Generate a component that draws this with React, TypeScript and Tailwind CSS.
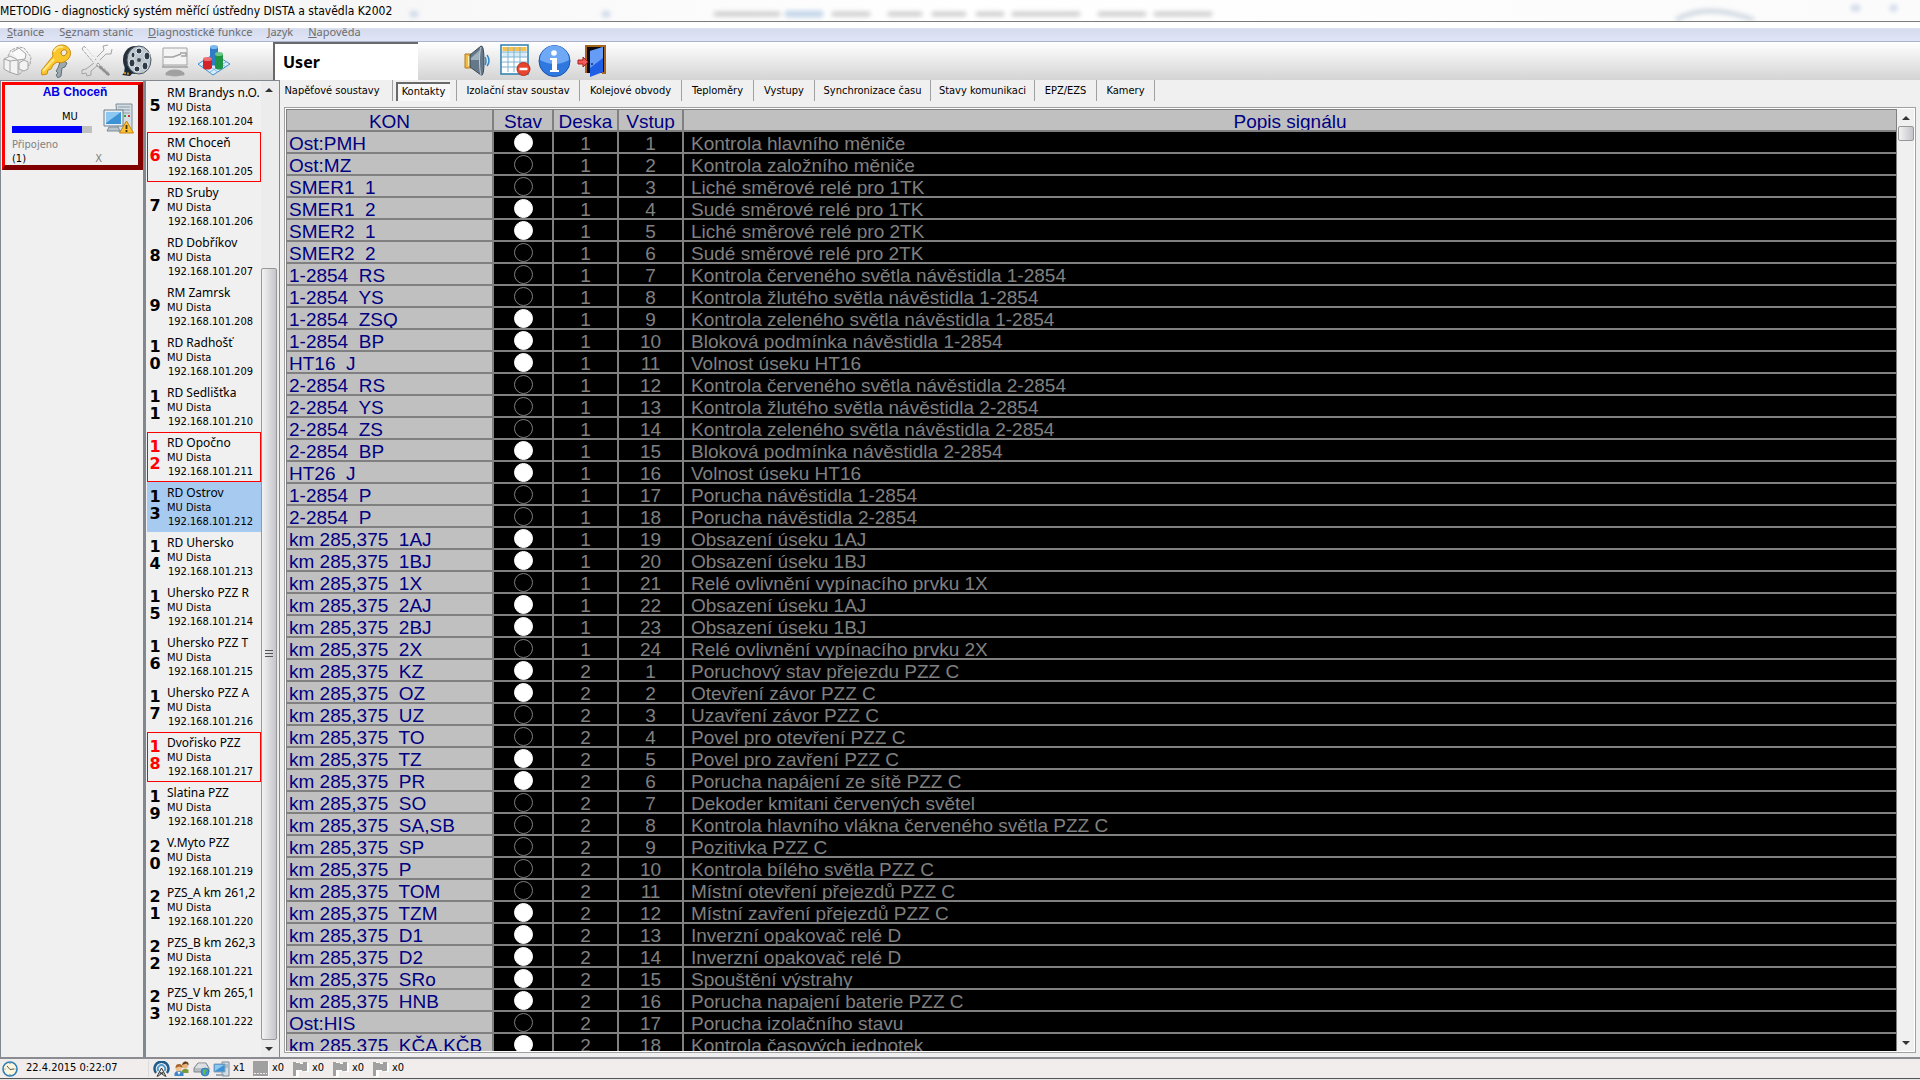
import type { ReactNode } from 'react';
import clsx from 'clsx';

const menu = ['Stanice', 'Seznam stanic', 'Diagnostické funkce', 'Jazyk', 'Napověda'];
const menuKeys = [0, 1, 0, 0, 0];

const tabs = [
  { label: 'Napěťové soustavy', width: 'w-[113px] pr-2' },
  { label: 'Kontakty', width: 'w-16 pr-1' },
  { label: 'Izolační stav soustav', width: 'w-[123px]' },
  { label: 'Kolejové obvody', width: 'w-[102px]' },
  { label: 'Teploměry', width: 'w-[72px]' },
  { label: 'Vystupy', width: 'w-[61px]' },
  { label: 'Synchronizace času', width: 'w-[116px]' },
  { label: 'Stavy komunikaci', width: 'w-[104px]' },
  { label: 'EPZ/EZS', width: 'w-[62px]' },
  { label: 'Kamery', width: 'w-[58px]' },
];

const stations = [
  { no: 5, name: 'RM Brandys n.O.' },
  { no: 6, name: 'RM Choceň', alarm: true },
  { no: 7, name: 'RD Sruby' },
  { no: 8, name: 'RD Dobříkov' },
  { no: 9, name: 'RM Zamrsk' },
  { no: 10, name: 'RD Radhošť' },
  { no: 11, name: 'RD Sedlišťka' },
  { no: 12, name: 'RD Opočno', alarm: true },
  { no: 13, name: 'RD Ostrov', selected: true },
  { no: 14, name: 'RD Uhersko' },
  { no: 15, name: 'Uhersko PZZ R' },
  { no: 16, name: 'Uhersko PZZ T' },
  { no: 17, name: 'Uhersko PZZ A' },
  { no: 18, name: 'Dvořisko PZZ', alarm: true },
  { no: 19, name: 'Slatina PZZ' },
  { no: 20, name: 'V.Myto PZZ' },
  { no: 21, name: 'PZS_A km 261,2' },
  { no: 22, name: 'PZS_B km 262,3' },
  { no: 23, name: 'PZS_V km 265,1' },
];

// name, state, board, input, description
type Row = [string, 0 | 1, number, number, string];

const rows: Row[] = [
  ['Ost:PMH', 1, 1, 1, 'Kontrola hlavního měniče'],
  ['Ost:MZ', 0, 1, 2, 'Kontrola založního měniče'],
  ['SMER1  1', 0, 1, 3, 'Liché směrové relé pro 1TK'],
  ['SMER1  2', 1, 1, 4, 'Sudé směrové relé pro 1TK'],
  ['SMER2  1', 1, 1, 5, 'Liché směrové relé pro 2TK'],
  ['SMER2  2', 0, 1, 6, 'Sudé směrové relé pro 2TK'],
  ['1-2854  RS', 0, 1, 7, 'Kontrola červeného světla návěstidla 1-2854'],
  ['1-2854  YS', 0, 1, 8, 'Kontrola žlutého světla návěstidla 1-2854'],
  ['1-2854  ZSQ', 1, 1, 9, 'Kontrola zeleného světla návěstidla 1-2854'],
  ['1-2854  BP', 1, 1, 10, 'Bloková podmínka návěstidla 1-2854'],
  ['HT16  J', 1, 1, 11, 'Volnost úseku HT16'],
  ['2-2854  RS', 0, 1, 12, 'Kontrola červeného světla návěstidla 2-2854'],
  ['2-2854  YS', 0, 1, 13, 'Kontrola žlutého světla návěstidla 2-2854'],
  ['2-2854  ZS', 0, 1, 14, 'Kontrola zeleného světla návěstidla 2-2854'],
  ['2-2854  BP', 1, 1, 15, 'Bloková podmínka návěstidla 2-2854'],
  ['HT26  J', 1, 1, 16, 'Volnost úseku HT16'],
  ['1-2854  P', 0, 1, 17, 'Porucha návěstidla 1-2854'],
  ['2-2854  P', 0, 1, 18, 'Porucha návěstidla 2-2854'],
  ['km 285,375  1AJ', 1, 1, 19, 'Obsazení úseku 1AJ'],
  ['km 285,375  1BJ', 1, 1, 20, 'Obsazení úseku 1BJ'],
  ['km 285,375  1X', 0, 1, 21, 'Relé ovlivnění vypínacího prvku 1X'],
  ['km 285,375  2AJ', 1, 1, 22, 'Obsazení úseku 1AJ'],
  ['km 285,375  2BJ', 1, 1, 23, 'Obsazení úseku 1BJ'],
  ['km 285,375  2X', 0, 1, 24, 'Relé ovlivnění vypínacího prvku 2X'],
  ['km 285,375  KZ', 1, 2, 1, 'Poruchový stav přejezdu PZZ C'],
  ['km 285,375  OZ', 1, 2, 2, 'Otevření závor PZZ C'],
  ['km 285,375  UZ', 0, 2, 3, 'Uzavření závor PZZ C'],
  ['km 285,375  TO', 0, 2, 4, 'Povel pro otevření PZZ C'],
  ['km 285,375  TZ', 1, 2, 5, 'Povel pro zavření PZZ C'],
  ['km 285,375  PR', 1, 2, 6, 'Porucha napájení ze sítě PZZ C'],
  ['km 285,375  SO', 0, 2, 7, 'Dekoder kmitani červených světel'],
  ['km 285,375  SA,SB', 0, 2, 8, 'Kontrola hlavního vlákna červeného světla PZZ C'],
  ['km 285,375  SP', 0, 2, 9, 'Pozitivka PZZ C'],
  ['km 285,375  P', 0, 2, 10, 'Kontrola bílého světla PZZ C'],
  ['km 285,375  TOM', 0, 2, 11, 'Místní otevření přejezdů PZZ C'],
  ['km 285,375  TZM', 1, 2, 12, 'Místní zavření přejezdů PZZ C'],
  ['km 285,375  D1', 1, 2, 13, 'Inverzní opakovač relé D'],
  ['km 285,375  D2', 1, 2, 14, 'Inverzní opakovač relé D'],
  ['km 285,375  SRo', 1, 2, 15, 'Spouštění výstrahy'],
  ['km 285,375  HNB', 1, 2, 16, 'Porucha napajení baterie PZZ C'],
  ['Ost:HIS', 0, 2, 17, 'Porucha izolačního stavu'],
  ['km 285,375  KČA,KČB', 1, 2, 18, 'Kontrola časových jednotek'],
];

function PrinterIcon() {
  return (
    <svg width="30" height="34" viewBox="0 0 30 34" fill="none" stroke="#a3a3a3">
      <path d="M1 15l6-3 8 4v15l-9-3-5-3zM7 17l-6-2M7 17l8-1M7 17v11" fill="#f3f3f3" />
      <path d="M5 12l3-6 8-3 5 1 7 9-1 8-4 1-5 7-3 2" strokeDasharray="3 1" />
      <path d="M9 8l7-4 7 6-1 5-7 1" fill="#fafafa" />
      <path d="M16 19l5-3 4 2v7l-4 2-5-2z" fill="#f3f3f3" />
    </svg>
  );
}

function KeysIcon() {
  return (
    <svg width="32" height="34" viewBox="0 0 32 34">
      <path d="M20 15l6 4-2 4-3 1-1 8-3 2-2-3 2-2-2-2 2-3z" fill="#9ba8ae" stroke="#5f6f78" />
      <path d="M12 12C10 6 15 1 21 1s10 6 8 11-8 8-13 6l-4 3-2 4-3 1-1 4-5 1-1-4z" fill="#fbc62c" stroke="#c98a10" />
      <path d="M13 8c1-4 5-6 9-5M2 27l11-12" stroke="#ffe98a" strokeWidth="2" fill="none" />
      <path d="M20 9c0-3 5-5 6-1 0 3-5 6-6 1z" fill="#eceae2" stroke="#b87b0c" />
    </svg>
  );
}

function ToolsIcon() {
  return (
    <svg width="32" height="34" viewBox="0 0 32 34" fill="none" stroke="#a3a3a3">
      <path d="M3 2l12 14M1 5l11 13M1 5l2-3M17 19l12 11-2 2-12-11z" strokeDasharray="3 1" />
      <path d="M16 13l7-7-1-4 5-1M19 16l6-6 5 0 1-5M13 19L5 25l-4 1 0 4 4-1 1 3 4-1 0-4 7-6" />
      <path d="M18 22l10 9" stroke="#8b8b8b" strokeWidth="2" />
      <path d="M4 4l10 11" stroke="#fff" />
    </svg>
  );
}

function ReelIcon() {
  return (
    <svg width="32" height="34" viewBox="0 0 32 34">
      <ellipse cx="14" cy="16" rx="12" ry="14" fill="#26303a" />
      <path d="M4 22c-1 5 0 7-3 9l8 1c2-2 3-4 4-7z" fill="#172736" />
      <path d="M3 29l6 1" stroke="#d68a28" strokeWidth="2" strokeDasharray="2 1" />
      <ellipse cx="18" cy="16" rx="12" ry="14" fill="#bcc6cc" stroke="#4a5761" />
      <g fill="#2d3a46" stroke="#e7edf0">
        <ellipse cx="18" cy="7" rx="3" ry="3" />
        <ellipse cx="26" cy="12" rx="3" ry="4" />
        <ellipse cx="24" cy="22" rx="3" ry="4" />
        <ellipse cx="16" cy="25" rx="3" ry="3" />
        <ellipse cx="11" cy="19" rx="3" ry="4" />
        <ellipse cx="12" cy="11" rx="2" ry="3" />
      </g>
      <circle cx="18" cy="16" r="2" fill="#3f4b55" />
    </svg>
  );
}

function ScreenIcon() {
  return (
    <svg width="28" height="34" viewBox="0 0 28 34" fill="none" stroke="#a3a3a3">
      <path d="M2 23V4h24v17H2" fill="#f4f4f4" />
      <path d="M3 13h9l8-3M19 9h6v3h-5M1 23h26" strokeWidth="1.5" />
      <path d="M9 27h10l4 2v2H5v-2z" fill="#a0a0a0" />
      <ellipse cx="14" cy="29" rx="8" ry="3" fill="#a0a0a0" />
    </svg>
  );
}

function ChartIcon() {
  return (
    <svg width="34" height="34" viewBox="0 0 34 34">
      <path d="M1 20L17 10l16 10-17 11z" fill="#d9ecfb" stroke="#3b8fd0" />
      <path d="M5 22l16-10M9 25l16-10M13 28l16-10M5 17l16 11M9 15l16 11M13 12l16 11" stroke="#6fb1e3" strokeWidth=".8" />
      <path d="M13 3v17c2 2 6 2 8 0V3z" fill="#2f7cc4" />
      <ellipse cx="17" cy="3" rx="4" ry="2" fill="#79b9ec" />
      <path d="M6 15v9c2 2 7 2 9 0v-9z" fill="#d2232a" />
      <ellipse cx="10.5" cy="15" rx="4.5" ry="2" fill="#ef6e72" />
      <path d="M18 10v14c2 2 6 2 8 0V10z" fill="#1f9446" />
      <ellipse cx="22" cy="10" rx="4" ry="2" fill="#6dc788" />
    </svg>
  );
}

function SpeakerIcon() {
  return (
    <svg width="26" height="34" viewBox="0 0 26 34">
      <path d="M1 10h6v14H1z" fill="#f3ba45" stroke="#b07a1e" />
      <path d="M4 12h3v10H4z" fill="#fff0a8" />
      <path d="M6 11L17 2q3-1 3 15t-3 14L6 23z" fill="#65788a" stroke="#3c4a58" />
      <path d="M7 14l9-8v10H7z" fill="#9fb0be" />
      <path d="M17 3c-2 6-2 22 0 28" stroke="#bccad4" fill="none" />
      <path d="M21 13q2 4 0 8M23 11q4 6 0 11" stroke="#3187c7" fill="none" strokeWidth="1.5" />
    </svg>
  );
}

function GridIcon() {
  return (
    <svg width="32" height="34" viewBox="0 0 32 34">
      <path d="M1 1h27v29H1z" fill="#fff" stroke="#2b7fae" strokeWidth="1.5" />
      <path d="M2.5 3h24v4h-24z" fill="#f6c04d" />
      <path d="M2.5 8h24v5h-24z" fill="#d8ecf7" />
      <path d="M2 8h25M2 13h25M2 18h25M2 23h25M8 3v25M14 3v25M20 3v25" stroke="#7fb2d0" />
      <circle cx="23.5" cy="25" r="6.5" fill="#e8452f" stroke="#b5301f" />
      <path d="M19.5 25h8" stroke="#fff" strokeWidth="2.5" />
    </svg>
  );
}

function InfoIcon() {
  return (
    <svg width="33" height="34" viewBox="0 0 33 34">
      <circle cx="16.5" cy="17" r="15.5" fill="#2f78e0" stroke="#1c56ad" />
      <path d="M2 16a14.5 14.5 0 0 1 29 0q-14 8-29 0z" fill="#6fa9f5" />
      <circle cx="16" cy="9" r="2.8" fill="#fff" />
      <path d="M12 14h7v12h2v2h-9v-2h2V16h-2z" fill="#fff" />
    </svg>
  );
}

function DoorIcon() {
  return (
    <svg width="32" height="34" viewBox="0 0 32 34">
      <path d="M9 29V2h19v27h-3" fill="#0b0b0b" stroke="#a5651f" strokeWidth="2" />
      <path d="M13 7l13-4v25l-13 5z" fill="#1f5fe6" />
      <path d="M13 7l13-4v11L13 24z" fill="#669bf6" />
      <circle cx="15" cy="20" r="1" fill="#0c2d78" />
      <path d="M1 16h5v-3l5 5-5 5v-3H1z" fill="#ef5959" stroke="#b11d1d" />
    </svg>
  );
}

function StationIcon() {
  return (
    <svg width="31" height="31" viewBox="0 0 31 31">
      <path d="M13 1h16v27H15z" fill="#d3dde4" stroke="#7c8c98" />
      <path d="M15 4h12M15 7h12M15 10h12" stroke="#8d9ca7" />
      <path d="M21 13h2" stroke="#2aa836" strokeWidth="2" />
      <path d="M25 13h2" stroke="#e02b2b" strokeWidth="2" />
      <path d="M1 7h19v16H1z" fill="#e8eff4" stroke="#6d7f8c" />
      <path d="M3 9h15v12H3z" fill="#3b93d6" />
      <path d="M3 9h15L3 20z" fill="#8cc8f2" />
      <path d="M6 24h9l2 4H4z" fill="#b9c5cd" stroke="#7c8c98" />
      <path d="M23.5 18l7 12h-14z" fill="#fcc134" stroke="#c88412" strokeLinejoin="round" />
      <path d="M23.5 22v4M23.5 27v2" stroke="#42310a" strokeWidth="1.8" />
    </svg>
  );
}

function ClockIcon() {
  return (
    <svg width="16" height="16" viewBox="0 0 16 16">
      <circle cx="8" cy="8" r="7" fill="#fbf6dc" stroke="#2d7fb8" strokeWidth="1.6" />
      <path d="M5 5l3 3.5L12 8" stroke="#555" fill="none" />
      <path d="M8 2v1M8 13v1M2.5 8h1M12.5 8h1" stroke="#777" />
    </svg>
  );
}

function AntennaIcon() {
  return (
    <svg width="17" height="16" viewBox="0 0 17 16" fill="none">
      <path d="M3 12a7 7 0 1 1 11 0" stroke="#1f5c8c" strokeWidth="2.5" />
      <path d="M5.500 10a3.700 3.700 0 1 1 6 0" stroke="#4f9bd0" strokeWidth="1.8" />
      <path d="M8.500 7L4 15.500M8.500 7l4.500 8.500M6.500 12h4M4.500 15.500l5.500-4M12.500 15.500L7 11.500" stroke="#333" />
    </svg>
  );
}

function UsersIcon() {
  return (
    <svg width="17" height="16" viewBox="0 0 16 16">
      <path d="M8 10q3-4 7-1v3H9z" fill="#7c9a3a" />
      <circle cx="11.5" cy="4.5" r="3" fill="#e7b27b" />
      <path d="M8.500 4q1-4 4-3.500 3 .5 2.500 4l-2-2z" fill="#5f3b1a" />
      <path d="M1 15v-3q4-5 9 0v3z" fill="#3f86c9" />
      <circle cx="5" cy="7.5" r="3" fill="#f1c391" />
      <path d="M2 7q0-4 3.500-4T9 7L6 5.500z" fill="#a9642a" />
      <path d="M4 11l1.500 3L7 11z" fill="#fff" />
    </svg>
  );
}

function DriveIcon() {
  return (
    <svg width="17" height="16" viewBox="0 0 17 16">
      <path d="M1 7l4-5h8l3 5v4H1z" fill="#b7bcc1" stroke="#7f868c" />
      <path d="M2 7l3.500-4.500h7L15 7z" fill="#dde0e3" />
      <circle cx="12" cy="11" r="4" fill="#3c93d8" stroke="#1f669e" strokeWidth=".6" />
      <path d="M10 9q3-2 4 1l-2 1 1 3q-3 0-3-3z" fill="#69bb3e" />
    </svg>
  );
}

function ComputerIcon() {
  return (
    <svg width="17" height="16" viewBox="0 0 17 16">
      <path d="M9 1h7v14H9z" fill="#d3dde4" stroke="#7c8c98" />
      <path d="M11 4h4M11 6h4" stroke="#8d9ca7" />
      <path d="M1 3h11v8H1z" fill="#3b93d6" stroke="#8fa3b2" />
      <path d="M2 4h9l-9 6z" fill="#8cc8f2" />
      <path d="M3 13h8v2H3z" fill="#9aa9b4" />
    </svg>
  );
}

function SquareIcon() {
  return (
    <svg width="17" height="16" viewBox="0 0 17 16">
      <path d="M1 1h15v15H1z" fill="#fff" />
      <path d="M0 0h15v15H0z" fill="#a0a0a0" />
      <path d="M1 12.500h13" stroke="#f0f0f0" strokeDasharray="2 1" />
    </svg>
  );
}

function FlagIcon() {
  return (
    <svg width="17" height="16" viewBox="0 0 17 16">
      <path d="M1 1h3v1h4v2h3V2h4v9h-4v-1H5v6H1z" fill="#fff" transform="translate(1 0)" />
      <path d="M0 1h3v1h4v1h3V1h4v9h-5V9H3v6H0z" fill="#a0a0a0" />
    </svg>
  );
}

function ToolButton({ label, className, children }: { label: string; className?: string; children: ReactNode }) {
  return (
    <button aria-label={label} className={clsx('flex items-center justify-center', className)}>
      {children}
    </button>
  );
}

function ScrollArrow({ up, label }: { up?: boolean; label: string }) {
  return (
    <button aria-label={label} className="flex h-[17px] w-full shrink-0 items-center justify-center">
      <svg width="8" height="4" viewBox="0 0 8 4">
        <path d={up ? 'M0 4l4-4 4 4z' : 'M0 0h8L4 4z'} fill="#333" />
      </svg>
    </button>
  );
}

function StationItem({ no, name, alarm, selected }: { no: number; name: string; alarm?: boolean; selected?: boolean }) {
  return (
    <li>
      <button
        className={clsx(
          'flex h-[50px] w-full items-center overflow-hidden border text-left',
          alarm ? 'border-[#ff0000]' : 'border-transparent',
          selected && 'bg-[#a6caf0]',
        )}
      >
        <span
          className={clsx(
            "flex w-[14px] shrink-0 flex-col items-center pb-1 font-['DejaVu_Sans'] text-base leading-[17px] font-bold",
            alarm && 'text-[#ff0000]',
          )}
        >
          {String(no).split('').map((d, i) => (
            <span key={i}>{d}</span>
          ))}
        </span>
        <span className="flex min-w-0 flex-col pl-[5px] text-[11px] leading-[14px] whitespace-nowrap">
          <span className="pb-px font-['Noto_Sans'] text-xs leading-[15px]">{name}</span>
          <span>MU Dista</span>
          <span className="pl-px">192.168.101.{199 + no}</span>
        </span>
      </button>
    </li>
  );
}

export default function App() {
  return (
    <div className="flex h-screen flex-col overflow-hidden bg-[#f0f0f0] font-['DejaVu_Sans_Condensed','DejaVu_Sans',sans-serif] text-[11px] text-black">
      <header className="shrink-0">
        <div className="relative flex h-[22px] items-center overflow-hidden border-b border-[#7b7b7b] bg-linear-to-r from-[#f2f2f2] via-white to-[#fbfbfb]">
          <h1 className="text-xs whitespace-nowrap">METODIG - diagnostický systém měřící ústředny DISTA a stavědla K2002</h1>
          <svg aria-hidden="true" className="absolute inset-0 h-full w-full blur-[2px]">
            <g stroke="#cfcfcf" strokeWidth="5" strokeLinecap="round">
              <path d="M716 14h62M834 14h34M890 14h30M934 14h30M978 14h24M1014 14h64M1100 14h44M1156 14h54" />
            </g>
            <path d="M788 14h32" stroke="#c6d8ea" strokeWidth="7" strokeLinecap="round" />
            <path d="M1676 20q30-18 78 0" stroke="#d3dbe4" strokeWidth="5" fill="none" />
            <path d="M1854 8h3M1893 8h1M413 14h2M605 14h2" stroke="#d2dcec" strokeWidth="7" strokeLinecap="round" />
          </svg>
        </div>
        <nav className="flex h-5 items-center gap-[15px] border-b border-[#aab3cb] bg-linear-to-b from-white from-30% via-[#d5dcee] via-35% to-[#e0e5f6] pl-[7px] font-['Noto_Sans'] text-[#6d6d6d]">
          {menu.map((m, i) => (
            <button key={m} className="leading-4 whitespace-nowrap">
              {m.slice(0, menuKeys[i])}
              <u>{m[menuKeys[i]]}</u>
              {m.slice(menuKeys[i] + 1)}
            </button>
          ))}
        </nav>
        <div className="flex h-[38px] bg-linear-to-b from-white to-[#d4d4d4]">
          <div className="flex w-[273px] shrink-0 items-center gap-2 pl-[3px]">
            <ToolButton label="Tisk"><PrinterIcon /></ToolButton>
            <ToolButton label="Přihlášení"><KeysIcon /></ToolButton>
            <ToolButton label="Nastavení"><ToolsIcon /></ToolButton>
            <ToolButton label="Záznam"><ReelIcon /></ToolButton>
            <ToolButton label="Obrazovka"><ScreenIcon /></ToolButton>
            <ToolButton label="Grafy"><ChartIcon /></ToolButton>
          </div>
          <input
            aria-label="Uživatel"
            readOnly
            value="User"
            className="h-[38px] w-[145px] border-t-2 border-l-2 border-[#696969] bg-white pl-2 font-['Noto_Sans'] text-base font-bold outline-none"
          />
          <div className="flex items-center gap-[6px] pl-[46px]">
            <ToolButton label="Zvuk"><SpeakerIcon /></ToolButton>
            <ToolButton label="Tabulka" className="pl-1"><GridIcon /></ToolButton>
            <ToolButton label="Informace"><InfoIcon /></ToolButton>
            <ToolButton label="Konec"><DoorIcon /></ToolButton>
          </div>
        </div>
      </header>

      <div className="flex min-h-0 flex-1 border-b-2 border-[#8a8c92]">
        <aside className="w-[145px] shrink-0 border-t border-r-2 border-l border-[#828790] pt-px pl-px">
          <button className="flex h-[88px] w-[141px] flex-col border-t-[3px] border-r-[5px] border-b-[5px] border-l-[3px] border-t-[#ff0000] border-r-[#800000] border-b-[#800000] border-l-[#ff0000] bg-[#f0f0f0] pl-[7px] text-left">
            <span className="w-full text-center font-['Liberation_Sans'] text-xs leading-[15px] font-bold text-[#0000e6]">AB Choceň</span>
            <span className="flex h-[34px] w-full items-end justify-between pr-1">
              <span className="flex w-20 flex-col gap-[2px] pb-px">
                <span className="pl-[50px] leading-[14px]">MU</span>
                <span className="block h-[7px] w-20 bg-[#c0c0c0]">
                  <span className="block h-full w-[70px] bg-[#0000ff]" />
                </span>
              </span>
              <StationIcon />
            </span>
            <span className="pt-1 leading-[14px] text-[#808080]">Připojeno</span>
            <span className="flex w-full justify-between pr-9 leading-[13px]">
              <span>(1)</span>
              <span className="text-[#808080]">X</span>
            </span>
          </button>
        </aside>

        <aside className="flex w-[135px] shrink-0 border-t border-r border-l border-[#828790]">
          <ul className="min-w-0 flex-1 overflow-hidden pt-px pl-px">
            {stations.map((s) => (
              <StationItem key={s.no} {...s} />
            ))}
          </ul>
          <div className="flex w-[18px] shrink-0 flex-col bg-[#ececec] pr-[2px]">
            <ScrollArrow up label="Nahoru" />
            <div className="flex min-h-0 flex-1 flex-col justify-end">
              <div className="flex h-[82%] items-center justify-center rounded-xs border border-[#979797] bg-linear-to-r from-[#f3f3f3] to-[#c4c4cb]">
                <div className="flex w-2 flex-col gap-[2px]">
                  <i className="h-px bg-[#555]" />
                  <i className="h-px bg-[#555]" />
                  <i className="h-px bg-[#555]" />
                </div>
              </div>
            </div>
            <ScrollArrow label="Dolů" />
          </div>
        </aside>

        <main className="flex min-w-0 flex-1 flex-col">
          <div role="tablist" className="flex h-[21px] shrink-0">
            {tabs.map((t) => (
              <button
                key={t.label}
                role="tab"
                aria-selected={t.label === 'Kontakty'}
                className={clsx('flex shrink-0 items-center justify-center border-r border-[#a0a0a0] pt-[2px] whitespace-nowrap', t.width)}
              >
                {t.label === 'Kontakty' ? (
                  <span className="flex h-[19px] w-[54px] items-center justify-center border-t-2 border-l-2 border-[#696969] bg-[#f8f8f8]">{t.label}</span>
                ) : (
                  t.label
                )}
              </button>
            ))}
          </div>
          <div className="mt-[6px] mr-1 mb-1 ml-1 flex min-h-0 flex-1 border border-[#a0a0a0] bg-white p-px">
            <div className="min-w-0 flex-1 overflow-hidden bg-black">
              <table className="w-full table-fixed border-separate border-spacing-0 border-t border-l border-[#808080] font-['Liberation_Sans'] text-[19px] leading-[23px]">
                <colgroup>
                  <col className="w-[207px]" />
                  <col className="w-[60px]" />
                  <col className="w-[65px]" />
                  <col className="w-[65px]" />
                  <col />
                </colgroup>
                <thead>
                  <tr className="bg-[#c0c0c0] text-[#000080]">
                    {['KON', 'Stav', 'Deska', 'Vstup', 'Popis signálu'].map((h) => (
                      <th key={h} className="border-r-2 border-b-2 border-[#808080] p-0 font-normal last:border-r">
                        <div className="h-5 overflow-hidden">{h}</div>
                      </th>
                    ))}
                  </tr>
                </thead>
                <tbody className="text-[#808080]">
                  {rows.map(([name, state, board, input, text]) => (
                    <tr key={name}>
                      <th scope="row" className="border-r-2 border-b-2 border-[#808080] bg-[#c0c0c0] p-0 text-left font-normal text-[#000080]">
                        <div className="h-5 overflow-hidden pl-[2px] whitespace-pre">{name}</div>
                      </th>
                      <td className="border-r-2 border-b-2 border-[#808080] p-0">
                        <div className={clsx('mx-auto h-[19px] w-[19px] rounded-full border', state ? 'border-white bg-white' : 'border-[#808080]')} />
                      </td>
                      <td className="border-r-2 border-b-2 border-[#808080] p-0 text-center">
                        <div className="h-5 overflow-hidden">{board}</div>
                      </td>
                      <td className="border-r-2 border-b-2 border-[#808080] p-0 text-center">
                        <div className="h-5 overflow-hidden">{input}</div>
                      </td>
                      <td className="border-r border-b-2 border-[#808080] p-0">
                        <div className="h-5 overflow-hidden pl-[7px] whitespace-pre">{text}</div>
                      </td>
                    </tr>
                  ))}
                </tbody>
              </table>
            </div>
            <div className="flex w-[17px] shrink-0 flex-col bg-[#f0f0f0] pl-px">
              <ScrollArrow up label="Řádek nahoru" />
              <div className="min-h-0 flex-1">
                <div className="h-[15px] rounded-xs border border-[#979797] bg-linear-to-r from-[#f3f3f3] to-[#c4c4cb]" />
              </div>
              <ScrollArrow label="Řádek dolů" />
            </div>
          </div>
        </main>
      </div>

      <footer className="shrink-0 bg-[#f0edec]">
        <div className="flex h-5 items-center border-b border-[#555] pl-[2px]">
          <ClockIcon />
          <time className="w-[131px] border-r border-[#dcdcdc] pl-2">22.4.2015 0:22:07</time>
          <div className="flex items-center gap-[3px] pl-1">
            <AntennaIcon />
            <UsersIcon />
            <DriveIcon />
            <ComputerIcon />
            <span className="w-[17px]">x1</span>
          </div>
          <div className="flex items-center gap-[2px] pl-[3px]">
            <SquareIcon />
            <span className="w-[19px]">x0</span>
            <FlagIcon />
            <span className="w-[19px]">x0</span>
            <FlagIcon />
            <span className="w-[19px]">x0</span>
            <FlagIcon />
            <span className="w-[19px]">x0</span>
          </div>
        </div>
        <div className="h-px bg-[#e4e4e4]" />
      </footer>
    </div>
  );
}
